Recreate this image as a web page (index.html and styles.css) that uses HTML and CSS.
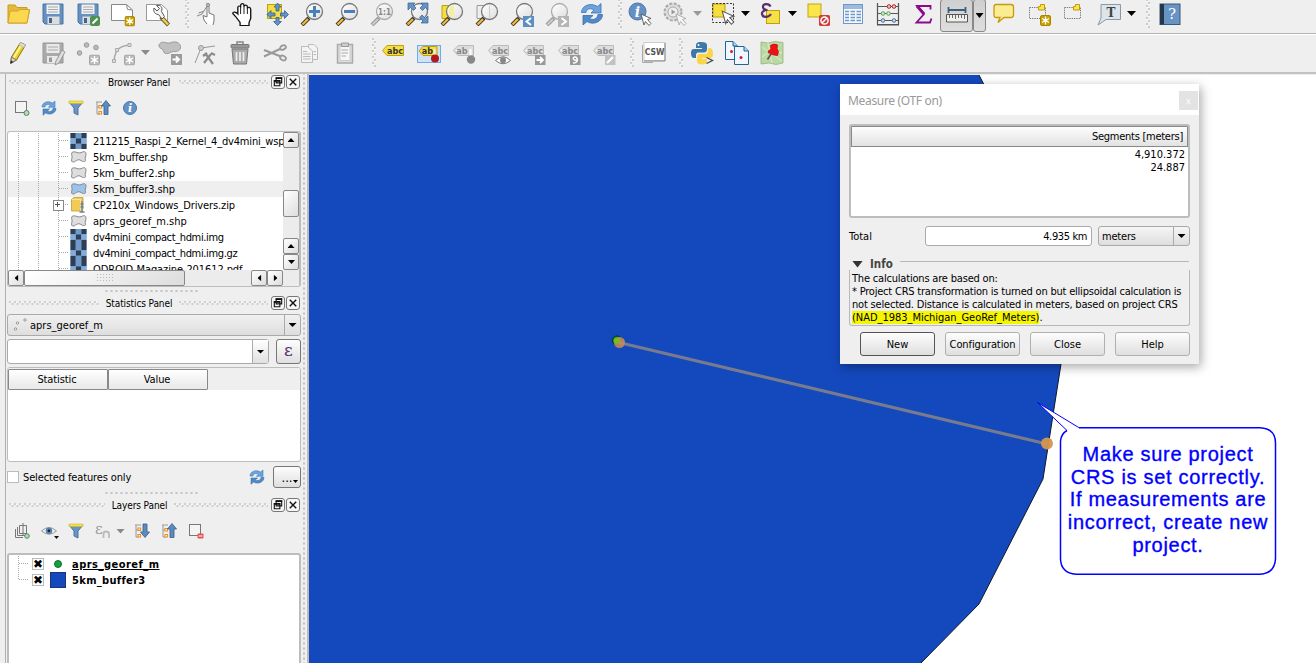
FILE: index.html
```html
<!DOCTYPE html>
<html lang="en">
<head>
<meta charset="utf-8">
<title>QGIS</title>
<link rel="stylesheet" href="styles.css">
</head>
<body>
<svg class="defs" aria-hidden="true">
  <defs>
    <linearGradient id="lens" x1="0" y1="0" x2="1" y2="1"><stop offset="0" stop-color="#fff"/><stop offset="1" stop-color="#dedede"/></linearGradient>
    <symbol id="mag" viewBox="0 0 24 24"><path d="M2 23L9 16" stroke="#333" stroke-width="4"/><path d="M2.500 22.500L8 17" stroke="#f5b731" stroke-width="2.400"/><circle cx="14.500" cy="9.500" r="8" fill="url(#lens)" stroke="#777" stroke-width="1.300"/></symbol>
    <symbol id="maggray" viewBox="0 0 24 24"><path d="M2 23L9 16" stroke="#999" stroke-width="4"/><path d="M2.500 22.500L8 17" stroke="#ccc" stroke-width="2"/><circle cx="14.500" cy="9.500" r="8" fill="url(#lens)" stroke="#aaa" stroke-width="1.300"/></symbol>
    <symbol id="refresh" viewBox="0 0 24 24"><path d="M1.500 10.500C1.500 4 10 0 17.500 4.500L21 1.500V11H11L14 8C10 5.500 6.500 7 6 10.500Z" fill="#6ba3de" stroke="#3b75b2" stroke-width=".8"/><path d="M22.500 12.500C22.500 20 13 23.500 7 19.500L3 23V13.500H13L9.500 16.500C13 18.500 17.500 17 18 12.500Z" fill="#4f8acb" stroke="#3b6ea5" stroke-width=".8"/></symbol>
    <symbol id="floppy" viewBox="0 0 24 24"><path d="M2 2H22V22H4L2 20Z" fill="#6490c2" stroke="#4b729f"/><path d="M5.500 2.500H18.500V12H5.500Z" fill="#f1f1f1"/><path d="M7 5H17M7 7.500H17M7 10H17" stroke="#aaa"/><path d="M6.500 14.500H18.500V22H6.500Z" fill="#ddd"/><path d="M8 16H11V21H8Z" fill="#3f6690"/></symbol>
    <symbol id="cursor" viewBox="0 0 12 14"><path d="M1 1L11 5.500L7.500 6.500L11 10.500L9 12.500L5.500 8.500L4 12Z" fill="#fff" stroke="#555" stroke-width=".9"/></symbol>
    <symbol id="cursorgray" viewBox="0 0 12 14"><path d="M1 1L11 5.500L7.500 6.500L11 10.500L9 12.500L5.500 8.500L4 12Z" fill="#f4f4f4" stroke="#aaa" stroke-width=".9"/></symbol>
    <symbol id="badge" viewBox="0 0 11 11"><rect x=".5" y=".5" width="10" height="10" rx="1.500" fill="#c9a000" stroke="#aa8500"/><path d="M5.500 1.500V9.500M2 3.500L9 7.500M9 3.500L2 7.500" stroke="#fff" stroke-width="1.300"/><circle cx="5.500" cy="5.500" r="1.800" fill="#fff"/></symbol>
    <symbol id="badgegray" viewBox="0 0 11 11"><rect x=".5" y=".5" width="10" height="10" rx="1.500" fill="#bbb" stroke="#a5a5a5"/><path d="M5.500 1.500V9.500M2 3.500L9 7.500M9 3.500L2 7.500" stroke="#fff" stroke-width="1.300"/><circle cx="5.500" cy="5.500" r="1.800" fill="#fff"/></symbol>
    <symbol id="tag" viewBox="0 0 24 14"><path d="M1.500 6.500L6 1.500H21.500V11.500H6Z" fill="#ddd" stroke="#bbb"/><circle cx="4.500" cy="6.500" r="1" fill="#fff"/></symbol>
    <symbol id="raster" viewBox="0 0 16 16"><path d="M0 0H16V16H0Z" fill="#6f9acb"/><path d="M0 0H5V5H0ZM11 0H16V5H11ZM0 11H5V16H0ZM5.500 5.500H10.500V10.500H5.500ZM11 11H16V16H11Z" fill="#2d3e55"/><path d="M0 5.500H5V10.500H0ZM11 5.500H16V10.500H11Z" fill="#86abd6"/></symbol>
    <symbol id="poly" viewBox="0 0 17 13"><path d="M2.500 1.500C6 .5 8 3.500 11 2.200C14 .5 16 1 16 3.500C16 6 14.500 7 15.500 9.500C16 11.500 13 11.500 11 10C8 8 6 10.500 4 11.500C1.500 12 1 10 2 7.500C2.500 5 .5 3 2.500 1.500Z" fill="currentColor" stroke="#888"/></symbol>
    <symbol id="floaticon" viewBox="0 0 13 13"><path d="M4.500 2H10.500V7.500H4.500ZM2.500 5H8.500V10.500H2.500Z" fill="#f4f4f4" stroke="#111" stroke-width="1.200"/><path d="M4 2.500H11M2 5.500H9" stroke="#111" stroke-width="1.600"/></symbol>
    <symbol id="closeicon" viewBox="0 0 13 13"><path d="M3 3L10 10M10 3L3 10" stroke="#111" stroke-width="1.500"/></symbol>
    <symbol id="filter" viewBox="0 0 16 16"><path d="M1 2H15L10 8V15L6 13V8Z" fill="#6a94c6" stroke="#4a75a8"/><path d="M1 1H15V3.500H1Z" fill="#f5e04b" stroke="#cdb62d" stroke-width=".6"/></symbol>
    <symbol id="treeup" viewBox="0 0 16 16"><path d="M1 2H7M2 2V14H5M2 7H5" stroke="#999" fill="none"/><path d="M4 5.500H6.500V8H4ZM4 11.500H6.500V14H4Z" fill="#fff" stroke="#f09020" stroke-width="1.200"/><path d="M11 .5L15.500 6H13V14.500H9V6H6.500Z" fill="#5d8bbf" stroke="#345e8c" stroke-width=".8"/></symbol>
    <symbol id="treedown" viewBox="0 0 16 16"><path d="M1 2H7M2 2V14H5M2 7H5" stroke="#999" fill="none"/><path d="M4 5H6.500V7.500H4ZM4 11.500H6.500V14H4Z" fill="#fff" stroke="#f09020" stroke-width="1.200"/><path d="M11 14.500L15.500 9H13V1H9V9H6.500Z" fill="#5d8bbf" stroke="#345e8c" stroke-width=".8"/></symbol>
    <pattern id="zig" width="5" height="4" patternUnits="userSpaceOnUse"><path d="M0 0H2V2H0ZM2.500 2H4.500V4H2.500Z" fill="#d0d0d0"/><path d="M2 1H3V2H2Z" fill="#fff"/></pattern>
    <pattern id="zigv" width="4" height="6" patternUnits="userSpaceOnUse"><path d="M0 0H2V2H0ZM2 3H4V5H2Z" fill="#cdcdcd"/><path d="M1 2H2V3H1ZM3 5H4V6H3Z" fill="#fff"/></pattern>
  </defs>
</svg>

<div class="app">
  <div class="toolbar first">
    <div class="slot"><svg class="ic" viewBox="0 0 24 24"><path d="M2 21V3H9L11 5.500H21V9L23.500 8L21 21Z" fill="#e5b93c" stroke="#cd9b20"/><path d="M2 21L4 9H12L14 7.500H23.500L21 21Z" fill="#fbd84f" stroke="#d3a428"/></svg></div>
    <div class="slot"><svg class="ic"><use href="#floppy"/></svg></div>
    <div class="slot"><svg class="ic" viewBox="0 0 24 24"><use href="#floppy" width="24" height="24"/><rect x="14" y="14" width="10" height="10" rx="2" fill="#4f9152"/><path d="M16.500 21.500L21.500 16.500" stroke="#fff" stroke-width="1.800"/></svg></div>
    <div class="slot"><svg class="ic" viewBox="0 0 24 24"><path d="M.5 2.500H15.500L21.500 8V18.500H.5Z" fill="#fff" stroke="#888"/><path d="M15.500 2.500L16.500 7.500L21.500 8" fill="none" stroke="#888"/><use href="#badge" x="13.500" y="14" width="10.500" height="10.500"/></svg></div>
    <div class="slot"><svg class="ic" viewBox="0 0 24 24"><path d="M.5 2.500H15.500L21.500 8V18.500H.5Z" fill="#fff" stroke="#999"/><path d="M15 15L22.500 23" stroke="#6a5a20" stroke-width="4.200"/><path d="M16 16L22 22.500" stroke="#f0cf60" stroke-width="2.400"/><path d="M8 6L11 9L13.500 6.500L10.500 3.500C15 2.500 17 5.500 15.500 9.500L18.500 14.500L16 17L12.500 12.500C9 12.500 7 9.500 8 6Z" fill="#f3f3f3" stroke="#555"/></svg></div>
    <svg class="grip g1"><rect width="4" height="29" fill="url(#zigv)"/></svg>
    <div class="slot"><svg class="ic" viewBox="0 0 24 24"><path d="M12 22L9 18L8 13.500L12 15V5C12 3.500 14 3.500 14 5V11L19 13V19L18 23" fill="#fff" stroke="#777"/><path d="M2 14L7 12L14 1M3.500 11L8 9.500M11.500 1L15 4" stroke="#888" fill="none"/><circle cx="13" cy="3" r="1.500" fill="#ccc" stroke="#888"/></svg></div>
    <div class="slot"><svg class="ic" viewBox="0 0 24 24"><path d="M9 23V20L5 14L2.500 11C2.500 9 5 9 7 11.500V5C7 3 9.500 3 9.500 5V3C9.500 .5 12.500 .5 12.500 3V4C13 2 15.500 2 15.500 4.500V6C16 4 18.500 4.500 18.500 7V16L17 20V23Z" transform="translate(0 .5) scale(1.120 1)" fill="#fff" stroke="#111" stroke-width="1.200"/><path d="M10.600 5V12M14 4V12M17.400 6V12" stroke="#222"/></svg></div>
    <div class="slot"><svg class="ic" viewBox="0 0 24 24"><rect x="2.500" y="2.500" width="14" height="14" fill="#f6df3d" stroke="#bba010"/><path d="M12.500 1L16 5H14V9H11V5H9ZM12.500 23.500L8.500 19.500H11V15.500H14V19.500H16.500ZM2 12.500L6 8.500V11H10V14H6V16.500ZM23.500 12.500L19.500 8.500V11H15.500V14H19.500V16.500Z" fill="#6592c7" stroke="#365f91" stroke-width=".8"/></svg></div>
    <div class="slot"><svg class="ic" viewBox="0 0 24 24"><use href="#mag" width="24" height="24"/><path d="M14.500 4V15M9 9.500H20" stroke="#4a7fb7" stroke-width="3"/></svg></div>
    <div class="slot"><svg class="ic" viewBox="0 0 24 24"><use href="#mag" width="24" height="24"/><path d="M9 9.500H20" stroke="#4a7fb7" stroke-width="3"/></svg></div>
    <div class="slot"><svg class="ic" viewBox="0 0 24 24"><use href="#maggray" width="24" height="24"/><text x="14.500" y="12.500" text-anchor="middle" class="one">1:1</text></svg></div>
    <div class="slot"><svg class="ic" viewBox="0 0 24 24"><use href="#mag" width="24" height="24"/><path d="M3 1H10L8 3L11 6L8.500 8.500L5.500 5.500L3 8ZM23 1V8L20.500 5.500L17.500 8.500L15 6L18 3L16 1ZM23 21H16L18 19L14.500 15.500L17 13L20.500 16.500L23 14Z" fill="#6592c7" stroke="#365f91" stroke-width=".7"/></svg></div>
    <div class="slot"><svg class="ic" viewBox="0 0 24 24"><path d="M2 3.500H13V16.500H2Z" fill="#f6df3d" stroke="#bba010"/><use href="#mag" width="24" height="24"/><path d="M14 3V16C7 15 7 4 14 3Z" fill="#f7eda0"/></svg></div>
    <div class="slot"><svg class="ic" viewBox="0 0 24 24"><path d="M2 3.500H13V16.500H2Z" fill="#eee" stroke="#999"/><use href="#mag" width="24" height="24"/><path d="M14.500 3.500V15.500" stroke="#ccc"/></svg></div>
    <div class="slot"><svg class="ic" viewBox="0 0 24 24"><use href="#mag" width="24" height="24"/><rect x="13" y="14" width="11" height="11" fill="#5d8fc4"/><path d="M21 16L16.500 19.500L21 23" stroke="#fff" stroke-width="2" fill="none"/></svg></div>
    <div class="slot"><svg class="ic" viewBox="0 0 24 24"><use href="#maggray" width="24" height="24"/><rect x="13" y="14" width="11" height="11" fill="#b5b5b5"/><path d="M16.500 16L21 19.500L16.500 23" stroke="#fff" stroke-width="2" fill="none"/></svg></div>
    <div class="slot"><svg class="ic"><use href="#refresh"/></svg></div>
    <svg class="grip g2"><rect width="4" height="29" fill="url(#zigv)"/></svg>
    <div class="slot"><svg class="ic" viewBox="0 0 24 24"><circle cx="9.500" cy="9.500" r="8.500" fill="#6490c4" stroke="#4a75a8"/><text x="9.500" y="14.500" text-anchor="middle" class="info-i">i</text><use href="#cursor" x="12" y="11" width="12" height="14"/></svg></div>
    <div class="slot"><svg class="ic" viewBox="0 0 24 24"><circle cx="10" cy="10" r="8.500" fill="#ddd" stroke="#aaa" stroke-width="2" stroke-dasharray="3 1.500"/><circle cx="10" cy="10" r="5" fill="#eee" stroke="#aaa"/><path d="M8.500 7.500L12.500 10L8.500 12.500Z" fill="#999"/><use href="#cursorgray" x="12" y="11" width="12" height="14"/></svg></div>
    <i class="tri gray"></i>
    <div class="slot s2"><svg class="ic" viewBox="0 0 24 24"><rect x="2" y="2" width="12" height="13" fill="#f6df3d" stroke="#bba010"/><rect x="1.500" y="1.500" width="21" height="19" fill="none" stroke="#333" stroke-dasharray="2 1.500"/><use href="#cursor" x="10" y="8" width="14" height="16"/></svg></div>
    <i class="tri"></i>
    <div class="slot s2"><svg class="ic" viewBox="0 0 24 24"><rect x="8.500" y="8.500" width="13" height="13" fill="#f6e04a" stroke="#bba010"/><path d="M12.500 4.500C11 1 4.500 1.500 5 5C5.300 7.500 8 8 9.500 8C6.500 8 3.500 9.500 4 12C4.500 15.800 10.500 16 13 12" fill="none" stroke="#5c2d68" stroke-width="2.200"/></svg></div>
    <i class="tri"></i>
    <div class="slot s3"><svg class="ic" viewBox="0 0 24 24"><rect x="2" y="2" width="13" height="13" fill="#fae64a" stroke="#c3a50c"/><rect x="13" y="13" width="11" height="11" rx="1.500" fill="#d23c3c"/><circle cx="18.500" cy="18.500" r="3.600" fill="none" stroke="#fff" stroke-width="1.500"/><path d="M16 21L21 16" stroke="#fff" stroke-width="1.500"/></svg></div>
    <div class="slot"><svg class="ic" viewBox="0 0 24 24"><rect x="2.500" y="2.500" width="19" height="19" fill="#f5f8fc" stroke="#6d98c8"/><path d="M3 3H21V7H3Z" fill="#9dbcdd"/><path d="M4 9.500H8M9.500 9.500H14M15.500 9.500H20M4 12.500H8M9.500 12.500H14M15.500 12.500H20M4 15.500H8M9.500 15.500H14M15.500 15.500H20M4 18.500H8M9.500 18.500H14M15.500 18.500H20" stroke="#6d98c8" stroke-width="1.300"/></svg></div>
    <div class="slot"><svg class="ic" viewBox="0 0 24 24"><path d="M1.500 1V22.500H22.500V1M1 23H23M2 4.500H22M2 11.500H22M2 18.500H22" stroke="#555" fill="none" stroke-width="1.200"/><circle cx="13" cy="4.500" r="1.800" fill="#f4c9c9" stroke="#a22"/><circle cx="18" cy="4.500" r="1.800" fill="#f4c9c9" stroke="#a22"/><circle cx="7" cy="11.500" r="1.800" fill="#cfeccf" stroke="#58a05c"/><circle cx="12.500" cy="11.500" r="1.800" fill="#cfeccf" stroke="#58a05c"/><circle cx="7" cy="18.500" r="1.800" fill="#c9dcf0" stroke="#48749f"/><circle cx="18" cy="18.500" r="1.800" fill="#c9dcf0" stroke="#48749f"/></svg></div>
    <div class="slot"><svg class="ic" viewBox="0 0 24 24"><path d="M19.500 7.500V4H6L13 12L5.500 20.500H19L20.500 16.500" stroke="#8b0a8b" stroke-width="1.800" fill="none"/><path d="M6 4L13 12" stroke="#8b0a8b" stroke-width="3"/></svg></div>
    <div class="pressed"><svg class="ic" viewBox="0 0 24 24"><path d="M3.500 4V10M20.500 4V10M3 7H20" stroke="#3c5f7a" stroke-width="1.800"/><path d="M1.500 11.500H22.500V19H1.500Z" fill="#eef0e9" stroke="#555"/><path d="M4.500 12V15M7.500 12V15M10.500 12V16M13.500 12V15M16.500 12V15M19.500 12V16" stroke="#666"/></svg></div>
    <div class="pressed narrow"><i class="tri"></i></div>
    <div class="slot"><svg class="ic" viewBox="0 0 24 24"><path d="M4 2.500H19Q21.500 2.500 21.500 5V13Q21.500 15.500 19 15.500H12L6 20.500L8 15.500H4Q2 15.500 2 13V5Q2 2.500 4 2.500Z" fill="#f9ec93" stroke="#c79a10" stroke-width="1.300"/></svg></div>
    <div class="slot"><svg class="ic" viewBox="0 0 24 24"><rect x="2.500" y="5.500" width="16" height="11" fill="none" stroke="#777" stroke-dasharray="1.300 1"/><path d="M11.500 8V4.500H13.500V2.500H17.500V8Z" fill="#f9e54e" stroke="#c29a0c"/><use href="#badge" x="13" y="13" width="11" height="11"/></svg></div>
    <div class="slot"><svg class="ic" viewBox="0 0 24 24"><rect x="2.500" y="5.500" width="16" height="11" fill="none" stroke="#777" stroke-dasharray="1.300 1"/><path d="M11.500 8V4.500H13.500V2.500H17.500V8Z" fill="#f9e54e" stroke="#c29a0c"/></svg></div>
    <div class="slot"><svg class="ic" viewBox="0 0 24 24"><path d="M4 2.500H23.500V17.500H9L1 23L4 16Z" fill="#dde5ec" stroke="#8b98a5"/><text x="14" y="14.500" text-anchor="middle" class="tt">T</text></svg></div>
    <i class="tri"></i>
    <svg class="grip g3"><rect width="4" height="29" fill="url(#zigv)"/></svg>
    <div class="slot"><svg class="ic" viewBox="0 0 24 24"><rect x="2" y="2" width="20" height="20.500" fill="#6793c5" stroke="#3c5875"/><path d="M2 2H6V22.500H2Z" fill="#25374b"/><text x="14" y="17" text-anchor="middle" class="q">?</text></svg></div>
  </div>

  <div class="toolbar second">
    <div class="slot"><svg class="ic" viewBox="0 0 24 24"><path d="M4.500 22.500L5.500 16L14.500 1.500L19.500 4L10.500 19Z" fill="#e9cf28" stroke="#84750e"/><path d="M7.500 17L16 3" stroke="#fff48a" stroke-width="2"/><path d="M14.500 1.500L19.500 4L18 6.500L13 4Z" fill="#ddd" stroke="#aaa" stroke-width=".6"/><path d="M5.500 16L10.500 19L4.500 22.500Z" fill="#ddd0b8" stroke="#777"/><path d="M4.500 22.500L5 19.500L7.500 21Z" fill="#222"/></svg></div>
    <div class="slot"><svg class="ic" viewBox="0 0 24 24"><path d="M2 2H22V22H2Z" fill="#aaa" stroke="#979797"/><path d="M5.500 3H18.500V12H5.500ZM6 15H17V22H6Z" fill="#e9e9e9"/><path d="M7 6H17M7 9H17" stroke="#aaa"/><path d="M8 16.500H11V21H8Z" fill="#999"/><path d="M14 24L15 20L21 9L24 11L18 22Z" fill="#ddd" stroke="#999"/></svg></div>
    <div class="slot"><svg class="ic" viewBox="0 0 24 24"><g fill="#bbb" stroke="#999"><circle cx="3.500" cy="12" r="2.300"/><circle cx="10.500" cy="4" r="2.300"/><circle cx="20" cy="6.500" r="2.300"/></g><use href="#badgegray" x="13" y="13.500" width="11" height="11"/></svg></div>
    <div class="slot"><svg class="ic" viewBox="0 0 24 24"><path d="M3 20C4 9 8 5 19 4" stroke="#aaa" stroke-width="1.500" fill="none"/><g fill="#ddd" stroke="#aaa"><path d="M1.500 18.500H4.500V21.500H1.500ZM4.500 7.500H7.500V10.500H4.500ZM17 2.500H20V5.500H17Z"/></g><use href="#badgegray" x="13" y="13.500" width="11" height="11"/></svg></div>
    <i class="tri gray2"></i>
    <div class="slot s2"><svg class="ic" viewBox="0 0 24 24"><path d="M2.500 2C5 0 8 2.500 12 2C17 -.5 22 1.500 22.500 5.500C23 9.500 19 11 15.500 10.500C12 10.500 11 13.500 7.500 12.500C4.500 11.500 6 9 4 7.800C0 6.500 .3 3.500 2.500 2Z" fill="#c0c0c0" stroke="#999"/><rect x="13" y="13" width="11" height="11" fill="#9b9b9b"/><path d="M14.500 18.500H21M18 15.500L21 18.500L18 21.500" stroke="#fff" stroke-width="2" fill="none"/></svg></div>
    <div class="slot"><svg class="ic" viewBox="0 0 24 24"><path d="M2 22L8 7L22 5" stroke="#999" fill="none"/><circle cx="8" cy="7" r="2.500" fill="#ccc" stroke="#999"/><path d="M11 22L18 13M12 12L20 23M10 15L14 12M18 12L22 14" stroke="#8b8b8b" stroke-width="2.200"/></svg></div>
    <div class="slot"><svg class="ic" viewBox="0 0 24 24"><path d="M4 8H20L18.500 23H5.500Z" fill="#aaa" stroke="#777"/><path d="M8.500 11V20M12 11V20M15.500 11V20" stroke="#eee" stroke-width="1.700"/><rect x="3" y="3.500" width="18" height="3.500" rx="1" fill="#999" stroke="#777"/><path d="M9 3V1H15V3" fill="none" stroke="#888" stroke-width="1.500"/></svg></div>
    <div class="slot"><svg class="ic" viewBox="0 0 24 24"><path d="M1 9L18 15.500M1 15.500L18 7.500" stroke="#999" stroke-width="2"/><ellipse cx="20" cy="6.500" rx="3" ry="2" transform="rotate(-25 20 6.500)" fill="none" stroke="#999" stroke-width="1.800"/><ellipse cx="20" cy="17" rx="3" ry="2.200" transform="rotate(25 20 17)" fill="none" stroke="#999" stroke-width="1.800"/></svg></div>
    <div class="slot"><svg class="ic" viewBox="0 0 24 24"><g fill="#f3f3f3" stroke="#bbb"><path d="M10.500 3.500H16L19.500 7V18.500H10.500Z"/><path d="M3.500 5.500H9.500L14.500 10V21.500H3.500Z"/><path d="M5 10.500H9M5 13H12.500M5 15.500H12.500M5 18H12.500M15.500 10.500H18M15.500 13.500H18"/></g></svg></div>
    <div class="slot"><svg class="ic" viewBox="0 0 24 24"><path d="M4.500 3.500H19.500V22H4.500Z" fill="#ddd" stroke="#aaa" stroke-width="1.500"/><path d="M7 5.500H17V19.500H7Z" fill="#f6f6f6" stroke="#ccc"/><path d="M8.500 2H15.500V5.500H8.500Z" fill="#ccc" stroke="#999"/><path d="M8.500 9H15M8.500 12H15M8.500 15H13" stroke="#aaa" stroke-width="1.200"/></svg></div>
    <svg class="grip g4"><rect width="4" height="29" fill="url(#zigv)"/></svg>
    <div class="slot"><svg class="ic" viewBox="0 0 24 24"><path d="M.5 9.500L5 4.500H21.500V14.500H5Z" fill="#f6df3d" stroke="#c0a010"/><text x="13" y="12.500" text-anchor="middle" class="abc">abc</text></svg></div>
    <div class="slot"><svg class="ic boxed" viewBox="0 0 24 24"><rect x=".5" y="4.500" width="23" height="17" fill="#cfe2f7" stroke="#75a9e8"/><path d="M2 10L6 5.500H20V14.500H6Z" fill="#f6df3d" stroke="#c0a010"/><text x="10.500" y="13" text-anchor="middle" class="abc">ab</text><path d="M17.500 8V15" stroke="#eee" stroke-width="2"/><circle cx="18" cy="17.500" r="4" fill="#b3181d"/></svg></div>
    <div class="slot"><svg class="ic" viewBox="0 0 24 24"><use href="#tag" y="3" width="24" height="14"/><text x="10" y="12.500" text-anchor="middle" class="abc g">ab</text><path d="M18.500 8V15" stroke="#fff" stroke-width="2"/><circle cx="19" cy="18.500" r="4.200" fill="#888"/></svg></div>
    <div class="slot"><svg class="ic" viewBox="0 0 24 24"><use href="#tag" y="3" width="24" height="14"/><text x="13" y="12.500" text-anchor="middle" class="abc g">abc</text><path d="M8.500 19.500Q16 12 23.500 19.500Q16 26 8.500 19.500Z" fill="#fff" stroke="#777"/><circle cx="16" cy="19.300" r="3" fill="#888"/></svg></div>
    <div class="slot"><svg class="ic" viewBox="0 0 24 24"><use href="#tag" y="3" width="24" height="14"/><text x="13" y="12.500" text-anchor="middle" class="abc g">abc</text><rect x="13" y="14" width="10.500" height="10" fill="#999"/><path d="M14.500 19H21M18 16L21 19L18 22" stroke="#fff" stroke-width="1.800" fill="none"/></svg></div>
    <div class="slot"><svg class="ic" viewBox="0 0 24 24"><use href="#tag" y="3" width="24" height="14"/><text x="13" y="12.500" text-anchor="middle" class="abc g">abc</text><rect x="13" y="14" width="10.500" height="10" fill="#999"/><path d="M16 22C22 22 21 16 18 16C15 16 16 20 20 19" stroke="#fff" stroke-width="1.500" fill="none"/></svg></div>
    <div class="slot"><svg class="ic" viewBox="0 0 24 24"><use href="#tag" y="3" width="24" height="14"/><text x="13" y="12.500" text-anchor="middle" class="abc g">abc</text><rect x="13" y="14" width="10.500" height="10" fill="#c2c2c2"/><path d="M15 22L21 16" stroke="#fff" stroke-width="2.200"/></svg></div>
    <svg class="grip g5"><rect width="4" height="29" fill="url(#zigv)"/></svg>
    <div class="slot"><svg class="ic" viewBox="0 0 24 24"><path d="M.5 4V21.500H11" stroke="#aaa" fill="none"/><rect x="2" y="1.500" width="21" height="18" fill="#fff" stroke="#ccc"/><path d="M2 20H23V2" stroke="#888" fill="none"/><text x="12.500" y="13.500" text-anchor="middle" class="csw">CSW</text></svg></div>
    <svg class="grip g6"><rect width="4" height="29" fill="url(#zigv)"/></svg>
    <div class="slot"><svg class="ic" viewBox="0 0 24 24"><path d="M11 1C7 1 6 2.500 6 4.500V7H12V8H4C1.500 8 1 10 1 12.500C1 15 2 17 4 17H6V14C6 12 7.500 11.500 9 11.500H14C16 11.500 17 10 17 8.500V4C17 2 15 1 11 1Z" fill="#3d78a8"/><path d="M18 7H20C22 7 23 10 23 13C23 15.500 22 17 20 17H12V18H17V20C17 22.500 15 23.500 12 23.500C9 23.500 7 22.500 7 20V16C7 13.500 8.500 13 10 13H15C17 13 18 11.500 18 10Z" fill="#fbd548"/><circle cx="8.500" cy="4" r="1" fill="#fff"/><path d="M16.500 16.500L22.500 19.500L16.500 22.500" stroke="#444" stroke-width="1.300" fill="none"/></svg></div>
    <div class="slot"><svg class="ic" viewBox="0 0 24 24"><g fill="#eef6ff" stroke="#26648e"><path d="M.5 .5H8L12.500 5V18.500H.5Z"/><path d="M9.500 5.500H19L23.500 10V23.500H9.500Z"/><path d="M8 .5V5H12.500M19 5.500V10H23.500" fill="#a8d4ee"/></g><circle cx="6.500" cy="10.500" r="1.500" fill="#e31b1b"/><circle cx="16" cy="16.500" r="1.500" fill="#e31b1b"/></svg></div>
    <div class="slot"><svg class="ic" viewBox="0 0 24 24"><path d="M1 1L8 2L15 .5L23 1.500V22L16 23.500L9 22L1 23Z" fill="#b9d9a2" stroke="#8cab78" stroke-width=".7"/><path d="M2 16L10 10L22 12M8 2L12 22M2 6L22 20" stroke="#d6e6bb" stroke-width="1.400" fill="none"/><path d="M7.500 18.500L11 13" stroke="#555" stroke-width="1.600"/><path d="M10.500 4.500Q14 2 17.500 4L17 7.500Q19.500 10 17.500 14.500Q13 14.500 8 11.500Q8 9 11 8.500Z" fill="#f01212" stroke="#c40c0c" stroke-width=".8" stroke-linejoin="round"/></svg></div>
  </div>

  <div class="main">
    <div class="dock">
      <div class="title"><svg class="zig z1"><rect width="100%" height="4" fill="url(#zig)"/></svg><span class="tname n1">Browser Panel</span><svg class="zig z2"><rect width="100%" height="4" fill="url(#zig)"/></svg><span class="tbtn"><svg><use href="#floaticon"/></svg></span><span class="tbtn"><svg><use href="#closeicon"/></svg></span></div>
      <div class="ptools browser-tools">
        <svg viewBox="0 0 16 16"><rect x="1.500" y="1.500" width="11" height="11" fill="#f4f4f4" stroke="#777"/><circle cx="12.500" cy="13" r="2.500" fill="#bcd8bc" stroke="#4f8b57"/></svg>
        <svg><use href="#refresh"/></svg><svg><use href="#filter"/></svg><svg><use href="#treeup"/></svg>
        <svg viewBox="0 0 16 16"><circle cx="8" cy="8" r="6.500" fill="#6490c8" stroke="#4a75a8"/><text x="8" y="12" text-anchor="middle" class="info-s">i</text></svg>
      </div>
      <div class="box browser">
        <div class="brow">
          <div class="tree">
            <div class="row"><b></b><svg class="ri"><use href="#raster"/></svg><span class="w1">211215_Raspi_2_Kernel_4_dv4mini_wspr</span></div>
            <div class="row"><b></b><svg class="ri"><use href="#poly"/></svg><span class="w2">5km_buffer.shp</span></div>
            <div class="row"><b></b><svg class="ri"><use href="#poly"/></svg><span class="w2">5km_buffer2.shp</span></div>
            <div class="row sel"><b></b><svg class="ri"><use href="#poly"/></svg><span class="w2">5km_buffer3.shp</span></div>
            <div class="row"><b class="plus"></b><svg class="ri" viewBox="0 0 16 16"><path d="M1 2.500L3.500 .5H12.500V12L11 14H1Z" fill="#f0cc56" stroke="#ba912a" stroke-width=".7"/><path d="M1.500 2.500H10V13.500" fill="none" stroke="#f9e69c"/><path d="M11.500 4V15M9 15H14M10 7H13M10 10H13" stroke="#6f7f8f" stroke-width="1.300"/></svg><span class="w2">CP210x_Windows_Drivers.zip</span></div>
            <div class="row"><b></b><svg class="ri"><use href="#poly"/></svg><span>aprs_georef_m.shp</span></div>
            <div class="row"><b></b><svg class="ri"><use href="#raster"/></svg><span class="w3">dv4mini_compact_hdmi.img</span></div>
            <div class="row"><b></b><svg class="ri"><use href="#raster"/></svg><span class="w3">dv4mini_compact_hdmi.img.gz</span></div>
            <div class="row"><b></b><svg class="ri"><use href="#raster"/></svg><span class="w2">ODROID-Magazine-201612.pdf</span></div>
          </div>
          <div class="vscroll"><span class="sb up"></span><i class="sp1"></i><span class="sb thumb"></span><i class="sp2"></i><span class="sb up"></span><span class="sb down"></span></div>
        </div>
        <div class="hscroll"><span class="sb left"></span><span class="sb hthumb"><i class="dots"></i></span><i class="grow"></i><span class="sb left"></span><span class="sb right"></span></div>
      </div>
      <div class="split"></div>
      <div class="title"><svg class="zig z1"><rect width="100%" height="4" fill="url(#zig)"/></svg><span class="tname n2">Statistics Panel</span><svg class="zig z2"><rect width="100%" height="4" fill="url(#zig)"/></svg><span class="tbtn"><svg><use href="#floaticon"/></svg></span><span class="tbtn"><svg><use href="#closeicon"/></svg></span></div>
      <div class="combo"><svg class="pts" viewBox="0 0 16 16"><g fill="#eee" stroke="#888" stroke-width=".8"><circle cx="2.500" cy="12" r="1.200"/><circle cx="4.500" cy="6" r="1.200"/><circle cx="12" cy="3" r="1.200"/></g></svg><span class="cname">aprs_georef_m</span><span class="drop"><i class="tri s"></i></span></div>
      <div class="editrow"><div class="edit"><span class="drop"><i class="tri s"></i></span></div><div class="btn epsb">ε</div></div>
      <div class="box stats"><div class="head"><span>Statistic</span><span>Value</span></div></div>
      <div class="checkrow"><i class="check"></i><span class="sfo">Selected features only</span><svg class="rf"><use href="#refresh"/></svg><div class="btn more">...<i class="tri xs"></i></div></div>
      <div class="split"></div>
      <div class="title"><svg class="zig z3"><rect width="100%" height="4" fill="url(#zig)"/></svg><span class="tname n3">Layers Panel</span><svg class="zig z4"><rect width="100%" height="4" fill="url(#zig)"/></svg><span class="tbtn"><svg><use href="#floaticon"/></svg></span><span class="tbtn"><svg><use href="#closeicon"/></svg></span></div>
      <div class="ptools layer-tools">
        <svg viewBox="0 0 16 16"><path d="M1.500 6V14.500H9M3.500 4V12.500H11M5.500 2.500H12.500V10.500H5.500ZM9 0V12" fill="none" stroke="#777"/><circle cx="13" cy="13" r="2.300" fill="#bcd8bc" stroke="#4f8b57"/></svg>
        <svg viewBox="0 0 16 16"><path d="M.5 8Q8 1 15.500 8Q8 14.500 .5 8Z" fill="#eee" stroke="#999"/><circle cx="8" cy="7.800" r="3.300" fill="#5b83b0"/><circle cx="8" cy="7.800" r="1.300" fill="#123"/><path d="M13 13H18L15.500 16Z" fill="#111"/></svg>
        <svg><use href="#filter"/></svg>
        <svg viewBox="0 0 16 16"><text x="0" y="11" class="epsg">ε</text><path d="M8.500 15V11Q8.500 8.500 11 8.500Q14 8.500 14 11V15" fill="none" stroke="#bbb" stroke-width="1.800"/></svg>
        <i class="tri gray2"></i>
        <svg><use href="#treedown"/></svg><svg><use href="#treeup"/></svg>
        <svg viewBox="0 0 16 16"><rect x="1.500" y="1.500" width="11" height="11" fill="#f4f4f4" stroke="#777"/><rect x="9.500" y="10.500" width="6" height="5" rx="1" fill="#e85050"/><path d="M10.500 13H14.500" stroke="#fff"/></svg>
      </div>
      <div class="box layers">
        <div class="lrow"><i class="stub"></i><span class="x">✖</span><i class="dot"></i><strong class="u">aprs_georef_m</strong></div>
        <div class="lrow"><i class="stub last"></i><span class="x">✖</span><i class="sq"></i><strong>5km_buffer3</strong></div>
      </div>
    </div>
    <div class="vsplit"></div>
    <div class="map">
      <svg class="canvas" viewBox="309 75 1007 588">
        <path d="M300 60H972L979 75L1064 240V345L1061 364L1043 479L979 604L921 663V680H300Z" fill="#1448bd" stroke="#10182c"/>
        <circle cx="617" cy="340.500" r="4.500" fill="#0a9a2c" stroke="#072b14"/>
        <path d="M619 342.500L1047 444" stroke="#777b8d" stroke-width="3"/>
        <circle cx="619.500" cy="342.500" r="5.500" fill="#c98f55" opacity=".85"/>
        <circle cx="616.500" cy="340.500" r="3" fill="#6fc01e" opacity=".8"/>
        <circle cx="1047" cy="443.500" r="6" fill="#d4974e" opacity=".95"/>
        <path d="M1079 427.700L1037.500 402.500L1067 430.500" fill="#fff" stroke="#00f" stroke-width="1"/>
        <path d="M1079 427.700H1262Q1275.700 429 1275.700 441V561Q1274 574.500 1262 574.500H1074Q1061.500 573 1060.500 561V441Q1061 434 1067 430.500Z" fill="#fff"/>
        <path d="M1079 427.700H1260Q1275.500 428.500 1275.500 443V559Q1274.500 573.500 1260 574.300H1076Q1061 573 1060.500 559V441Q1061 434 1067 430.500" fill="none" stroke="#00f" stroke-width="1.500"/>
      </svg>
      <div class="callout"><span>Make sure project</span><span>CRS is set correctly.</span><span>If measurements are</span><span>incorrect, create new</span><span>project.</span></div>
      <div class="dialog">
        <div class="dtitle"><span>Measure (OTF on)</span><i>x</i></div>
        <div class="dbody">
          <div class="box seg"><div class="shead"><span>Segments [meters]</span></div><p>4,910.372</p><p>24.887</p></div>
          <div class="total"><label>Total</label><div class="tedit"><span>4.935 km</span></div><div class="unit"><span>meters</span><span class="drop"><i class="tri s"></i></span></div></div>
          <div class="info">
            <div class="legend"><i class="tri big"></i><strong>Info</strong><hr></div>
            <div class="itext"><div class="i1">The calculations are based on:</div><div class="i2">* Project CRS transformation is turned on but ellipsoidal calculation is</div><div class="i3">not selected. Distance is calculated in meters, based on project CRS</div><div class="i4"><mark>(NAD_1983_Michigan_GeoRef_Meters)</mark>.</div></div>
          </div>
          <div class="btns"><div class="btn def">New</div><div class="btn cfg">Configuration</div><div class="btn">Close</div><div class="btn">Help</div></div>
        </div>
      </div>
    </div>
  </div>
</div>
</body>
</html>
```

FILE: styles.css
```css
* { box-sizing: border-box; }
html, body { margin: 0; }
body { width: 1316px; height: 663px; overflow: hidden; background: #efefef; color: #000; font: 11px/13px "DejaVu Sans Condensed", "Noto Sans", sans-serif; }
.defs { position: absolute; width: 0; height: 0; }
.app { display: flex; flex-direction: column; height: 663px; }
i { font-style: normal; }
svg { display: block; flex: none; }
span { white-space: nowrap; }

.toolbar { display: flex; flex: none; align-items: center; }
.first { height: 34px; padding-bottom: 6px; border-bottom: 1px solid #b4b4b4; }
.second { height: 38px; border-top: 1px solid #fff; padding-bottom: 2px; }
.slot { width: 35px; flex: none; display: flex; justify-content: center; }
.s2 { margin-left: 1px; }
.s3 { margin-left: 2px; }
.ic { width: 24px; height: 24px; overflow: visible; }
.grip { width: 4px; height: 29px; }
.g1 { margin: 0 0 0 10px; }
.g2 { margin: 0 0 0 9px; }
.g3 { margin: 0 2px 0 9px; }
.g4 { margin: 0 0 0 10px; }
.g5 { margin: 0 2px 0 9px; }
.g6 { margin: 0 1px 0 8px; }
.tri { flex: none; width: 8px; height: 5px; margin: 0 2px; background: #000; clip-path: polygon(0 0, 100% 0, 50% 100%); }
.toolbar > .tri { width: 9px; margin: 0 1px; }
.toolbar > .tri.gray { margin: 0 2px 0 1px; }
.gray { background: #9a9a9a; }
.gray2 { background: #8a8a8a; }
.pressed { width: 33px; height: 33px; margin-top: 4px; border: 1px solid #888; border-radius: 3px; background: linear-gradient(#cfcfcf, #dedede); display: flex; align-items: center; justify-content: center; flex: none; }
.narrow { width: 13px; }
.pressed .ic { margin-top: -1px; }
.one { font: bold 8px "DejaVu Sans Condensed", sans-serif; fill: #888; }
.info-i { font: italic bold 14px "DejaVu Serif", serif; fill: #fff; }
.info-s { font: italic bold 11px "DejaVu Serif", serif; fill: #fff; }
.epsg { font: 15px "DejaVu Serif", serif; fill: #999; }
.tt { font: bold 12px "DejaVu Serif", serif; fill: #444; }
.q { font: 15px "DejaVu Serif", serif; fill: #fff; }
.abc { font: bold 9px "DejaVu Sans Condensed", sans-serif; fill: #333; }
.abc.g { fill: #888; }
.csw { font: bold 8.500px "DejaVu Sans Condensed", sans-serif; fill: #555; }

.main { flex: 1; display: flex; min-height: 0; border-top: 2px solid #c2c2c2; }
.dock { width: 296px; margin-left: 5px; padding-left: 1px; border-left: 1px solid #b0b0b0; display: flex; flex-direction: column; flex: none; }
.vsplit { width: 8px; flex: none; border-right: 2px solid #bbb; background: radial-gradient(circle, #c4c4c4 1px, transparent 1.300px) 0 2px / 6px 5px repeat-y; background-clip: padding-box; }
.title { height: 17px; flex: none; display: flex; align-items: center; font-size: 10px; padding: 0 1px 2px 2px; }
.zig { width: 90px; height: 4px; }
.z2 { width: 89px; }
.z3 { width: 96px; }
.z4 { width: 94px; }
.tname { flex: 1; text-align: center; }
.n1, .n2, .n3 { letter-spacing: -.1px; padding-top: 1px; }
.tbtn { width: 14px; height: 14px; margin-left: 1px; border: 1px solid #777; border-radius: 3px; background: #f7f7f7; flex: none; }
.tbtn svg { width: 12px; height: 12px; }
.z2 + .tbtn, .z4 + .tbtn { margin-left: 3px; }
.ptools { height: 34px; flex: none; display: flex; align-items: center; padding-left: 7px; gap: 11px; }
.ptools svg { width: 16px; height: 16px; overflow: visible; }
.browser-tools { margin-bottom: 6px; }
.layer-tools { margin-bottom: 5px; }
.layer-tools .tri { width: 9px; margin: 0 -2px 0 -6px; }
.box { border: 2px solid #bdbdbd; border-radius: 3px; background: #fff; overflow: hidden; flex: none; }
.browser { height: 156px; border-width: 1px 2px 1px 1px; }
.brow { display: flex; height: 138px; }
.tree { flex: 1; min-width: 0; overflow: hidden; padding-top: 1px; }
.row { height: 16px; display: flex; align-items: center; padding-left: 10px; background: repeating-linear-gradient(#aaa 0 1px, transparent 1px 2px) 10px 0 / 1px 16px no-repeat, repeating-linear-gradient(#aaa 0 1px, transparent 1px 2px) 30px 0 / 1px 16px no-repeat, repeating-linear-gradient(#aaa 0 1px, transparent 1px 2px) 50px 0 / 1px 16px no-repeat; }
.row.sel { background-color: #efefef; }
.row b { width: 52px; height: 16px; flex: none; background: repeating-linear-gradient(90deg, #aaa 0 1px, transparent 1px 2px) 41px 7px / 9px 1px no-repeat; }
.row .ri { width: 17px; height: 16px; color: #dedede; }
.sel .ri { color: #9cc3ec; }
.row span { margin-left: 6px; }
.w1 { letter-spacing: -.17px; }
.w2 { letter-spacing: -.1px; }
.w3 { letter-spacing: -.36px; }
.plus { position: relative; }
.plus::before { content: ""; position: absolute; left: 35px; top: 3px; width: 9px; height: 9px; border: 1px solid #888; background: linear-gradient(#555, #555) 1px 3px / 5px 1px no-repeat, linear-gradient(#555, #555) 3px 1px / 1px 5px no-repeat, #fff; }
.vscroll { width: 16px; flex: none; background: #ececec; display: flex; flex-direction: column; }
.sb { display: flex; align-items: center; justify-content: center; width: 16px; height: 16px; flex: none; border: 1px solid #888; border-radius: 2px; background: linear-gradient(135deg, #fff, #ddd); }
.up::after, .down::after, .left::after, .right::after { content: ""; width: 7px; height: 4px; background: #000; clip-path: polygon(50% 0, 100% 100%, 0 100%); }
.down::after { transform: rotate(180deg); }
.left::after { transform: rotate(-90deg); }
.right::after { transform: rotate(90deg); }
.sp1 { height: 42px; }
.sp2 { flex: 1; }
.thumb { height: 27px; }
.hscroll { display: flex; height: 16px; padding-right: 16px; background: #ececec; }
.hthumb { width: 161px; }
.grow { flex: 1; }
.dots { width: 18px; height: 10px; background: radial-gradient(circle, #bbb .8px, transparent 1px) 0 0 / 3px 3px; }
.split { height: 8px; flex: none; background: radial-gradient(circle, #c4c4c4 1px, transparent 1.300px) 0 0 / 5px 8px repeat-x; margin: 0 103px 0 97px; }

.combo { height: 22px; margin: 2px 0 3px; border: 1px solid #aaa; border-radius: 3px; background: linear-gradient(#f0f0f0, #dedede); display: flex; align-items: center; padding-left: 5px; flex: none; }
.pts { width: 16px; height: 16px; }
.cname { flex: 1; margin-left: 1px; }
.drop { width: 16px; align-self: stretch; display: flex; align-items: center; justify-content: center; border-left: 1px solid #aaa; background: linear-gradient(#fff, #e0e0e0); }
.combo .drop, .unit .drop { background: none; }
.s { width: 8px; height: 4px; }
.editrow { display: flex; height: 25px; margin: 0 0 3px; gap: 7px; flex: none; }
.edit { flex: 1; border: 1px solid #aaa; border-radius: 3px; background: #fff; display: flex; justify-content: flex-end; }
.btn { border: 1px solid #b0b0b0; border-radius: 3px; background: linear-gradient(#fdfdfd, #dfdfdf); display: flex; align-items: center; justify-content: center; white-space: nowrap; }
.epsb { width: 25px; border-color: #777; font: 17px/1 "DejaVu Serif", serif; color: #5c2d68; padding-bottom: 3px; }
.stats { height: 95px; border-width: 1px; }
.head { height: 22px; padding: 1px 0 0; background: #efefef; display: flex; letter-spacing: -.1px; }
.head span { width: 100px; border: 1px solid #888; border-radius: 1px; background: linear-gradient(#fff, #e8e8e8); display: flex; align-items: center; justify-content: center; padding-right: 2px; }
.checkrow { display: flex; align-items: center; height: 22px; margin: 4px 0 1px; flex: none; }
.check { width: 12px; height: 12px; border: 1px solid #bbb; background: #fff; flex: none; }
.sfo { flex: 1; margin-left: 4px; letter-spacing: -.13px; }
.rf { width: 16px; height: 16px; margin-right: 8px; }
.more { width: 28px; height: 22px; border-color: #777; position: relative; font-size: 13px; }
.xs { position: absolute; width: 5px; height: 3px; right: 0; bottom: 4px; }
.layers { height: 120px; padding: 1px 0; }
.lrow { height: 16px; display: flex; align-items: center; padding-left: 9px; letter-spacing: .48px; }
.lrow + .lrow { letter-spacing: .33px; }
.stub { width: 14px; height: 16px; background: repeating-linear-gradient(#aaa 0 1px, transparent 1px 2px) 0 0 / 1px 16px no-repeat, repeating-linear-gradient(90deg, #aaa 0 1px, transparent 1px 2px) 1px 7px / 9px 1px no-repeat; }
.stub.last { background-size: 1px 8px, 9px 1px; }
.x { width: 12px; height: 12px; border: 1px solid #bbb; background: #fff; font: bold 12px/10px "DejaVu Sans", sans-serif; letter-spacing: 0; display: flex; justify-content: center; flex: none; }
.dot { width: 8px; height: 8px; margin: 0 10px; border-radius: 50%; background: #0fa33b; border: 1px solid #1d6b35; }
.sq { width: 16px; height: 16px; margin: 0 6px; background: #1448bd; border: 1px solid #173577; }
.u { text-decoration: underline; }

.map { flex: 1; position: relative; background: #fff; margin-top: 1px; overflow: hidden; }
.canvas { width: 1007px; height: 588px; }
.callout { position: absolute; left: 751px; top: 368px; width: 216px; display: flex; flex-direction: column; align-items: center; font: 20px/22.700px "Liberation Sans", Arial, sans-serif; color: #00f; letter-spacing: .7px; -webkit-text-stroke: .35px #00f; }
.dialog { position: absolute; left: 531px; top: 9px; width: 359px; height: 280px; background: #efefef; box-shadow: 2px 3px 10px rgba(0,0,0,.35); }
.dtitle { height: 31px; background: #fff; display: flex; align-items: center; justify-content: space-between; padding: 2px 1px 0 8px; color: #999; font: 12px/16px "Noto Sans", sans-serif; }
.dtitle span { letter-spacing: -.33px; }
.dtitle i { width: 19px; height: 19px; background: #e3e3e3; color: #fff; display: flex; justify-content: center; align-items: center; font-size: 9px; }
.dbody { padding: 9px 9px 0; }
.seg { height: 94px; margin: 0; }
.shead { height: 21px; border: 1px solid #888; background: linear-gradient(#fdfdfd, #e2e2e2); display: flex; align-items: center; justify-content: flex-end; padding-right: 4px; margin-bottom: 1px; letter-spacing: -.26px; }
.seg p { margin: 0; text-align: right; padding-right: 3px; }
.total { display: flex; height: 20px; margin-top: 8px; align-items: center; }
.total label { width: 76px; }
.tedit { width: 167px; height: 20px; border: 1px solid #aaa; border-radius: 3px; background: #fff; display: flex; align-items: center; justify-content: flex-end; padding-right: 4px; letter-spacing: -.38px; }
.unit { margin-left: 6px; width: 92px; height: 20px; border: 1px solid #aaa; border-radius: 3px; background: linear-gradient(#f5f5f5, #dedede); display: flex; align-items: center; padding-left: 3px; letter-spacing: -.2px; }
.unit span:first-child { flex: 1; }
.info { margin-top: 12px; height: 68px; }
.legend { display: flex; align-items: center; height: 12px; color: #444; margin-left: 1px; }
.big { width: 11px; height: 7px; background: #333; }
.legend strong { margin-left: 5px; font-size: 11.500px; }
.legend hr { flex: 1; margin: 0 1px 6px 7px; border: 0; border-top: 1px solid #b8b8b8; }
.itext { height: 56px; border: solid #b8b8b8; border-width: 0 1px 1px; border-radius: 0 0 3px 3px; padding: 2px 0 0 2px; white-space: nowrap; }
.i1 { letter-spacing: -.19px; }
.i2 { letter-spacing: -.21px; }
.i3 { letter-spacing: -.19px; }
.i4 { letter-spacing: -.03px; }
mark { background: #f5f500; color: #000; }
.btns { display: grid; grid-template-columns: repeat(4, 75px); gap: 10px; justify-content: end; height: 24px; margin-top: 6px; }
.cfg { letter-spacing: -.1px; }
.def { border-color: #555; }
```
